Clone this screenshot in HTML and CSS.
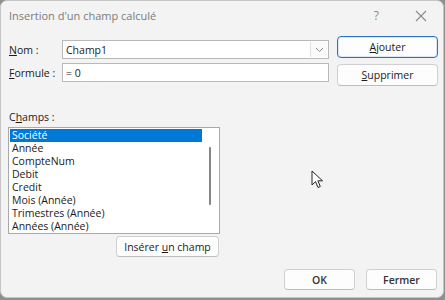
FILE: index.html
```html
<!DOCTYPE html>
<html lang="fr">
<head>
    <meta charset="UTF-8">
    <title>Insertion d'un champ calculé</title>
    <link rel="stylesheet" href="styles.css">
</head>
<body>
    <div class="dialog">
        <div class="title-bar">
            <span class="title">Insertion d'un champ calculé</span>
            <span class="help">?</span>
            <svg class="close" width="12" height="12" viewBox="0 0 12 12">
                <path d="M1 1 L11 11 M11 1 L1 11" stroke="#8a8a8a" stroke-width="1.1" fill="none"/>
            </svg>
        </div>

        <div class="content">
            <div class="top">
                <div class="fields">
                    <div class="field-row">
                        <label class="field-label"><u>N</u>om :</label>
                        <div class="combo">
                            <span class="combo-text">Champ1</span>
                            <span class="combo-arrow">
                                <svg width="9" height="6" viewBox="0 0 9 6">
                                    <path d="M1 1 L4.5 4.5 L8 1" stroke="#8c8c8c" stroke-width="1" fill="none"/>
                                </svg>
                            </span>
                        </div>
                    </div>
                    <div class="field-row">
                        <label class="field-label"><u>F</u>ormule :</label>
                        <div class="text-input">= 0</div>
                    </div>
                </div>
                <div class="side-buttons">
                    <button class="btn btn-default"><u>A</u>jouter</button>
                    <button class="btn"><u>S</u>upprimer</button>
                </div>
            </div>

            <div class="fields-label">C<u>h</u>amps :</div>
            <div class="listbox">
                <ul class="items">
                    <li class="selected">Société</li>
                    <li>Année</li>
                    <li>CompteNum</li>
                    <li>Debit</li>
                    <li>Credit</li>
                    <li>Mois (Année)</li>
                    <li>Trimestres (Année)</li>
                    <li>Années (Année)</li>
                </ul>
                <div class="scrollbar"><span class="thumb"></span></div>
            </div>
            <div class="insert-row">
                <button class="btn btn-insert">Insérer <u>u</u>n champ</button>
            </div>

            <div class="footer">
                <button class="btn btn-footer">OK</button>
                <button class="btn btn-footer">Fermer</button>
            </div>
        </div>

        <svg class="cursor" width="13" height="19" viewBox="0 0 13 19">
            <path d="M1 1 L1 15 L4.5 11.6 L7 17.5 L9.3 16.5 L6.9 10.8 L11.5 10.8 Z" fill="#fff" stroke="#222" stroke-width="1" stroke-linejoin="round"/>
        </svg>
    </div>
</body>
</html>
```

FILE: styles.css
```css
body {
    margin: 0;
    background: #8f8f8f;
    font-family: 'Open Sans', 'Noto Sans', sans-serif;
    font-size: 10.5px;
    color: #1b1b1b;
}

.dialog {
    position: relative;
    width: 444px;
    height: 298px;
    box-sizing: border-box;
    background: #f3f3f3;
    border: 1px solid #c6c6c6;
    border-radius: 7px;
    display: flex;
    flex-direction: column;
}

.title-bar {
    height: 29px;
    display: flex;
    align-items: center;
    padding-left: 8px;
}

.title {
    font-size: 11px;
    color: #7b7b7b;
    flex: 1;
}

.help {
    font-size: 12px;
    color: #8a8a8a;
    margin-right: 36px;
}

.close {
    margin-right: 16px;
}

.content {
    padding: 6px 5px 0 7px;
}

.top {
    display: flex;
}

.fields {
    padding-top: 4px;
    display: flex;
    flex-direction: column;
    gap: 4px;
}

.field-row {
    display: flex;
    align-items: center;
}

.field-label {
    width: 54px;
    padding-left: 1px;
    box-sizing: border-box;
}

.combo,
.text-input {
    width: 267px;
    height: 19px;
    box-sizing: border-box;
    background: #fff;
    border: 1px solid #b9b9b9;
    display: flex;
    align-items: center;
    padding-left: 3px;
}

.combo-text {
    flex: 1;
}

.combo-arrow {
    width: 16px;
    height: 15px;
    margin-right: 1px;
    display: flex;
    align-items: center;
    justify-content: center;
    background: #fafafa;
    border-left: 1px solid #e2e2e2;
}

.side-buttons {
    margin-left: 8px;
    display: flex;
    flex-direction: column;
    gap: 6px;
}

.btn {
    font-family: 'Open Sans', 'Noto Sans', sans-serif;
    font-size: 10.5px;
    color: #1b1b1b;
    background: #fdfdfd;
    border: 1px solid #d0d0d0;
    border-bottom-color: #bdbdbd;
    border-radius: 4px;
    padding: 0;
    box-sizing: border-box;
}

.side-buttons .btn {
    width: 101px;
    height: 22px;
}

.btn-default {
    border: 1px solid #2a72c2;
    box-shadow: inset 0 0 0 1px #dbe8f7;
}

.fields-label {
    margin-top: 24px;
    height: 15px;
    padding-left: 1px;
    margin-bottom: 2px;
}

.listbox {
    width: 212px;
    height: 107px;
    box-sizing: border-box;
    background: #fff;
    border: 1px solid #a9a9a9;
    display: flex;
    padding: 1px;
    overflow: hidden;
}

.items {
    list-style: none;
    margin: 0;
    padding: 0;
    width: 192px;
}

.items li {
    height: 13px;
    line-height: 13px;
    padding-left: 2px;
}

.items li.selected {
    background: #0078d7;
    color: #fff;
}

.scrollbar {
    flex: 1;
    display: flex;
    justify-content: center;
    padding-top: 18px;
}

.thumb {
    width: 2px;
    height: 58px;
    border-radius: 1px;
    background: #858585;
}

.insert-row {
    width: 211px;
    display: flex;
    justify-content: flex-end;
    margin-top: 2px;
}

.btn-insert {
    width: 103px;
    height: 21px;
}

.footer {
    margin-top: 12px;
    display: flex;
    justify-content: flex-end;
    gap: 11px;
    padding-right: 1px;
}

.btn-footer {
    width: 71px;
    height: 21px;
    font-weight: 600;
    color: #333;
}

.cursor {
    position: absolute;
    left: 310px;
    top: 169px;
}
```
